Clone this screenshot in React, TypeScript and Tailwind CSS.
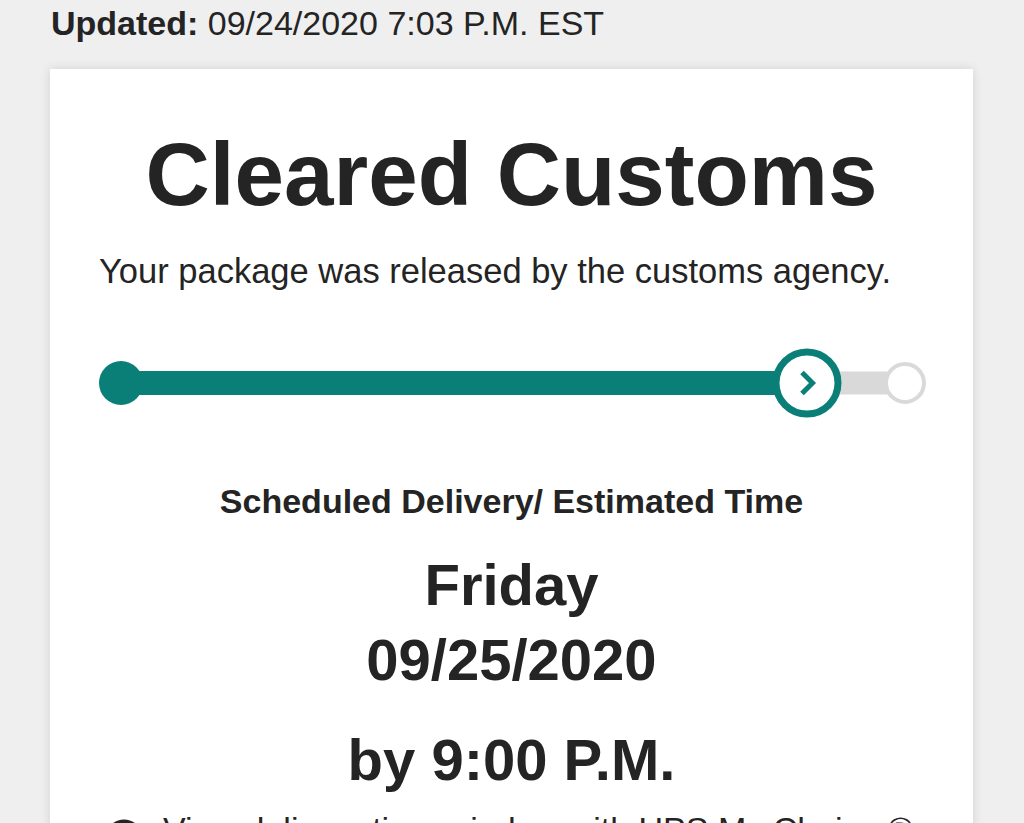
import React from "react";

const font = { fontFamily: '"Liberation Sans", Arial, Helvetica, sans-serif' };

function Progress() {
  return (
    <svg width="828" height="80" viewBox="0 0 828 80" className="block">
      <rect x="22" y="28" width="690" height="24" fill="#0a7f77" />
      <circle cx="22" cy="40" r="22" fill="#0a7f77" />
      <rect x="708" y="28.5" width="98" height="23" fill="#d9d9d9" />
      <circle cx="806" cy="40" r="19" fill="#ffffff" stroke="#d9d9d9" strokeWidth="4" />
      <circle cx="708" cy="40" r="31" fill="#ffffff" stroke="#0a7f77" strokeWidth="7" />
      <polyline
        points="703,29.5 713.5,40 703,50.5"
        fill="none"
        stroke="#0a7f77"
        strokeWidth="5"
        strokeLinejoin="miter"
      />
    </svg>
  );
}

export default function App() {
  return (
    <div className="w-[1024px] h-[823px] overflow-hidden bg-[#efefef] text-[#242424]" style={font}>
      <div className="pl-[51px] pt-[3px] text-[34px] leading-[40px] whitespace-nowrap">
        <span className="font-bold">Updated:</span> 09/24/2020 7:03 P.M. EST
      </div>
      <div className="ml-[50px] mt-[26px] w-[923px] bg-white shadow-[0_0_10px_rgba(0,0,0,0.12)] px-[49px] pt-[61px] pb-[40px]">
        <h1 className="text-center font-bold text-[89px] leading-[88px] whitespace-nowrap">Cleared Customs</h1>
        <p className="mt-[33px] text-[34.5px] leading-[40px] whitespace-nowrap">
          Your package was released by the customs agency.
        </p>
        <div className="mt-[52px]">
          <Progress />
        </div>
        <div className="mt-[58px] text-center font-bold text-[34px] leading-[40px] whitespace-nowrap">
          Scheduled Delivery/ Estimated Time
        </div>
        <div className="mt-[26px] text-center font-bold text-[58px] leading-[75px]">
          <div>Friday</div>
          <div>09/25/2020</div>
        </div>
        <div className="mt-[25px] text-center font-bold text-[58px] leading-[75px]">by 9:00 P.M.</div>
        <div className="mt-[12px] flex items-start gap-[20px] pl-[6px] whitespace-nowrap">
          <svg width="38" height="38" viewBox="0 0 38 38" className="mt-[10px] shrink-0">
            <circle cx="19" cy="19" r="16.5" fill="none" stroke="#242424" strokeWidth="4" />
            <path d="M19 9 V19 L25 23" fill="none" stroke="#242424" strokeWidth="3.5" strokeLinecap="round" />
          </svg>
          <span className="text-[34px] leading-[40px]">View delivery time window with UPS My Choice ®</span>
        </div>
      </div>
    </div>
  );
}
